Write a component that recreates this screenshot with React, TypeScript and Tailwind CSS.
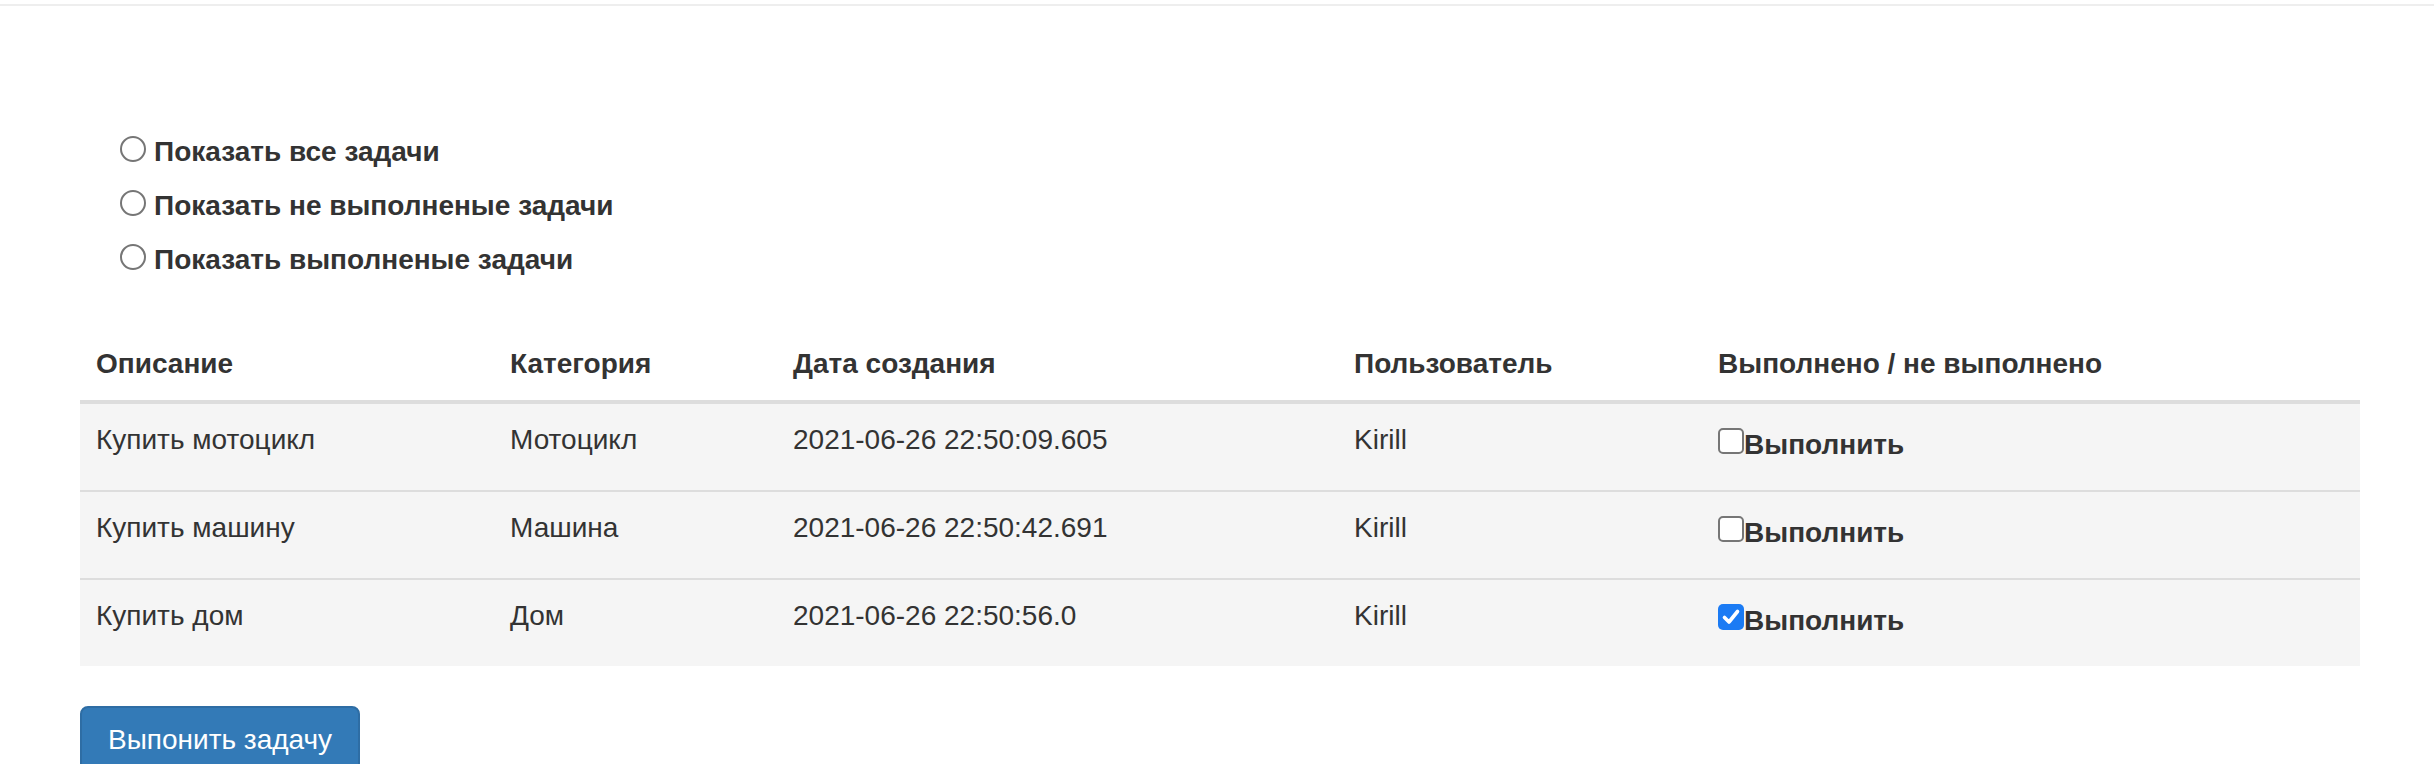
import React from "react";

type Row = { desc: string; cat: string; date: string; user: string; done: boolean };

const rows: Row[] = [
  { desc: "Купить мотоцикл", cat: "Мотоцикл", date: "2021-06-26 22:50:09.605", user: "Kirill", done: false },
  { desc: "Купить машину", cat: "Машина", date: "2021-06-26 22:50:42.691", user: "Kirill", done: false },
  { desc: "Купить дом", cat: "Дом", date: "2021-06-26 22:50:56.0", user: "Kirill", done: true },
];

function Radio({ label }: { label: string }) {
  return (
    <div className="flex items-start h-[44px]">
      <span className="mt-[8px] w-[26px] h-[26px] rounded-full border-2 border-[#767676] bg-white shrink-0" />
      <span className="ml-[8px] mt-[4px] leading-[40px] font-bold">{label}</span>
    </div>
  );
}

function Check({ checked }: { checked: boolean }) {
  return (
    <div className="flex items-start">
      {checked ? (
        <span className="mt-[8px] w-[26px] h-[26px] rounded-[5px] bg-[#1b7bf4] shrink-0 flex items-center justify-center">
          <svg width="26" height="26" viewBox="0 0 26 26">
            <path d="M6.5 13.5 L11 18 L19.5 7.5" fill="none" stroke="#ffffff" strokeWidth="3.6" strokeLinecap="round" strokeLinejoin="round" />
          </svg>
        </span>
      ) : (
        <span className="mt-[8px] w-[26px] h-[26px] rounded-[5px] border-2 border-[#767676] bg-white shrink-0" />
      )}
      <span className="mt-[5px] leading-[40px] font-bold">Выполнить</span>
    </div>
  );
}

export default function App() {
  const cols = "grid grid-cols-[414px_283px_561px_364px_658px]";
  return (
    <div className="w-[2434px] h-[764px] overflow-hidden bg-white text-[#333333] text-[28px] font-['Liberation_Sans',Arial,sans-serif]">
      <div className="pt-[4px]">
        <div className="h-[2px] bg-[#eeeeee]" />
      </div>
      <div className="pl-[120px] pt-[122px] flex flex-col gap-[10px]">
        <Radio label="Показать все задачи" />
        <Radio label="Показать не выполненые задачи" />
        <Radio label="Показать выполненые задачи" />
      </div>
      <div className="pl-[80px] pt-[48px]">
        <div className="w-[2280px]">
          <div className={`${cols} border-b-4 border-[#dddddd] font-bold`}>
            {["Описание", "Категория", "Дата создания", "Пользователь", "Выполнено / не выполнено"].map((h) => (
              <div key={h} className="px-[16px] py-[16px] leading-[40px] whitespace-nowrap">
                {h}
              </div>
            ))}
          </div>
          {rows.map((r, i) => (
            <div
              key={r.desc}
              className={`${cols} bg-[#f5f5f5] ${i > 0 ? "border-t-2 border-[#dddddd] h-[88px]" : "h-[86px]"}`}
            >
              <div className="px-[16px] pt-[16px] leading-[40px]">{r.desc}</div>
              <div className="px-[16px] pt-[16px] leading-[40px]">{r.cat}</div>
              <div className="px-[16px] pt-[16px] leading-[40px]">{r.date}</div>
              <div className="px-[16px] pt-[16px] leading-[40px]">{r.user}</div>
              <div className="px-[16px] pt-[16px]">
                <Check checked={r.done} />
              </div>
            </div>
          ))}
        </div>
        <div className="pt-[40px]">
          <button className="bg-[#337ab7] border-2 border-[#2e6da4] rounded-[8px] text-white px-[26px] py-[12px] leading-[40px] text-[28px]">
            Выпонить задачу
          </button>
        </div>
      </div>
    </div>
  );
}
